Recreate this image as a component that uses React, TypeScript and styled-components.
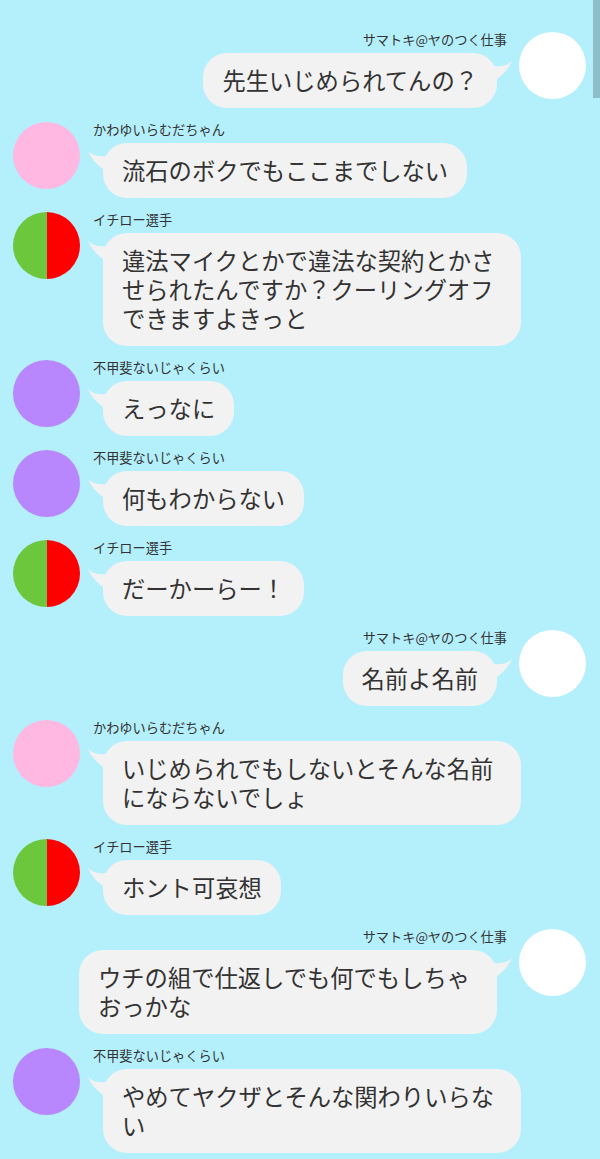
import React from 'react'
import styled, { createGlobalStyle, css } from 'styled-components'

type Side = 'left' | 'right'

type Message = {
  side: Side
  name: string
  avatar: 'white' | 'pink' | 'purple' | 'split'
  text: string
}

const messages: Message[] = [
  { side: 'right', name: 'サマトキ@ヤのつく仕事', avatar: 'white', text: '先生いじめられてんの？' },
  { side: 'left', name: 'かわゆいらむだちゃん', avatar: 'pink', text: '流石のボクでもここまでしない' },
  {
    side: 'left',
    name: 'イチロー選手',
    avatar: 'split',
    text: '違法マイクとかで違法な契約とかさせられたんですか？クーリングオフできますよきっと',
  },
  { side: 'left', name: '不甲斐ないじゃくらい', avatar: 'purple', text: 'えっなに' },
  { side: 'left', name: '不甲斐ないじゃくらい', avatar: 'purple', text: '何もわからない' },
  { side: 'left', name: 'イチロー選手', avatar: 'split', text: 'だーかーらー！' },
  { side: 'right', name: 'サマトキ@ヤのつく仕事', avatar: 'white', text: '名前よ名前' },
  { side: 'left', name: 'かわゆいらむだちゃん', avatar: 'pink', text: 'いじめられでもしないとそんな名前にならないでしょ' },
  { side: 'left', name: 'イチロー選手', avatar: 'split', text: 'ホント可哀想' },
  { side: 'right', name: 'サマトキ@ヤのつく仕事', avatar: 'white', text: 'ウチの組で仕返しでも何でもしちゃおっかな' },
  { side: 'left', name: '不甲斐ないじゃくらい', avatar: 'purple', text: 'やめてヤクザとそんな関わりいらない' },
]

const GlobalStyle = createGlobalStyle`
  html, body {
    margin: 0;
    padding: 0;
    background: #b4effc;
  }
  body {
    font-family: "Noto Sans CJK JP", "Noto Sans", sans-serif;
    color: #333;
  }
`

const Page = styled.main`
  min-height: 1159px;
  padding: 32px 0 20px;
  box-sizing: border-box;
  background: #b4effc;
`

const ScrollThumb = styled.div`
  position: fixed;
  top: 0;
  right: 0;
  width: 7px;
  height: 98px;
  background: #8dbdc8;
`

const Row = styled.div<{ $side: Side }>`
  display: flex;
  align-items: flex-start;
  margin-bottom: 14px;
  ${({ $side }) =>
    $side === 'left'
      ? css`
          flex-direction: row;
          padding-left: 13px;
        `
      : css`
          flex-direction: row-reverse;
          padding-right: 14px;
        `}
`

const avatarFills = {
  white: '#ffffff',
  pink: '#ffb8e2',
  purple: '#b987fd',
  split: 'linear-gradient(to right, #6cc73c 50%, #ff0000 50%)',
}

const Avatar = styled.div<{ $fill: Message['avatar'] }>`
  flex: none;
  width: 67px;
  height: 67px;
  border-radius: 50%;
  background: ${({ $fill }) => avatarFills[$fill]};
`

const Body = styled.div<{ $side: Side }>`
  display: flex;
  flex-direction: column;
  align-items: ${({ $side }) => ($side === 'left' ? 'flex-start' : 'flex-end')};
  ${({ $side }) => ($side === 'left' ? 'margin-left: 13px;' : 'margin-right: 12px;')}
`

const Name = styled.div`
  font-size: 13.2px;
  line-height: 16px;
  color: #333;
  white-space: nowrap;
`

const Bubble = styled.div<{ $side: Side }>`
  position: relative;
  box-sizing: border-box;
  max-width: 418px;
  margin-top: 5px;
  padding: 13px 19px;
  background: #f2f2f2;
  border-radius: 24px;
  font-size: 23.3px;
  line-height: 29px;
  color: #333;
  word-break: break-all;
  ${({ $side }) => ($side === 'left' ? 'margin-left: 10px;' : 'margin-right: 10px;')}
`

const Tail = styled.svg<{ $side: Side }>`
  position: absolute;
  top: 8px;
  width: 18px;
  height: 24px;
  ${({ $side }) =>
    $side === 'left'
      ? css`
          left: -15px;
        `
      : css`
          right: -15px;
          transform: scaleX(-1);
        `}
`

const BubbleTail = ({ side }: { side: Side }) => (
  <Tail $side={side} viewBox="0 0 18 24">
    <path d="M0 0 C4 9 10 15 18 20 L18 5 C10 6 4 4 0 0 Z" fill="#f2f2f2" />
  </Tail>
)

const App = () => {
  return (
    <>
      <GlobalStyle />
      <Page>
        {messages.map((m, i) => (
          <Row key={i} $side={m.side}>
            <Avatar $fill={m.avatar} />
            <Body $side={m.side}>
              <Name>{m.name}</Name>
              <Bubble $side={m.side}>
                <BubbleTail side={m.side} />
                {m.text}
              </Bubble>
            </Body>
          </Row>
        ))}
      </Page>
      <ScrollThumb />
    </>
  )
}

export default App
